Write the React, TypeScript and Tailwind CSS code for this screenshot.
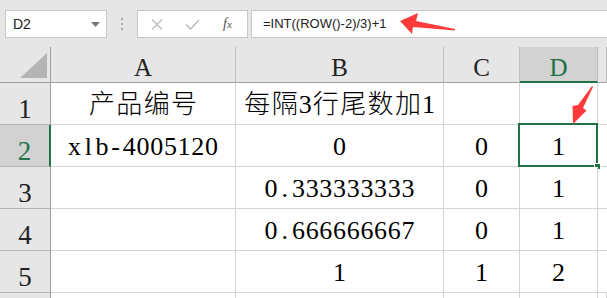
import React from "react";

const isCJK = (c: string) => /[\u3000-\u9fff\uff00-\uffef]/.test(c);

function Txt({ s }: { s: string }) {
  return (
    <>
      {s.split("").map((c, i) =>
        isCJK(c) ? (
          <span key={i} className="inline-block w-[27.4px] text-center text-[26px] font-light">
            {c}
          </span>
        ) : (
          <span key={i} className="inline-block w-[13.7px] text-center">
            {c}
          </span>
        )
      )}
    </>
  );
}

const cols = ["A", "B", "C", "D", ""];
const rows: string[][] = [
  ["产品编号", "每隔3行尾数加1", "", ""],
  ["xlb-4005120", "0", "0", "1"],
  ["", "0.333333333", "0", "1"],
  ["", "0.666666667", "0", "1"],
  ["", "1", "1", "2"],
];

export default function App() {
  return (
    <div className="relative w-[607px] h-[298px] overflow-hidden bg-[#e6e6e6] font-['Liberation_Serif','Noto_Sans_CJK_SC',serif]">
      {/* toolbar */}
      <div className="h-[47px] flex items-start pt-[10px] pl-[5px] font-['Liberation_Sans',Arial,sans-serif]">
        <div className="w-[102px] h-[28px] bg-white border border-[#c6c6c6] flex items-center justify-between pl-[7px] pr-[6px]">
          <span className="text-[14px] text-[#222]">D2</span>
          <svg width="9" height="5" viewBox="0 0 9 5">
            <path d="M0 0 L9 0 L4.5 5 Z" fill="#777" />
          </svg>
        </div>
        <div className="w-[30px] h-[28px] flex flex-col items-center justify-center gap-[3px]">
          <span className="w-[2px] h-[2px] bg-[#a8a8a8]" />
          <span className="w-[2px] h-[2px] bg-[#a8a8a8]" />
          <span className="w-[2px] h-[2px] bg-[#a8a8a8]" />
        </div>
        <div className="w-[111px] h-[28px] bg-white border border-[#c6c6c6] flex items-center">
          <svg className="ml-[13px]" width="12" height="11" viewBox="0 0 12 11">
            <path d="M1 0.5 L11 10.5 M11 0.5 L1 10.5" stroke="#bdbdbd" strokeWidth="1.4" fill="none" />
          </svg>
          <svg className="ml-[22px]" width="15" height="11" viewBox="0 0 15 11">
            <path d="M1 5.5 L5.5 10 L14 1" stroke="#bdbdbd" strokeWidth="1.6" fill="none" />
          </svg>
          <span className="ml-[23px] text-[14px] italic text-[#555] font-['Liberation_Serif',serif] leading-none">
            f<span className="text-[11px]">x</span>
          </span>
        </div>
        <div className="ml-[3px] flex-1 h-[28px] bg-white border border-r-0 border-[#c6c6c6] flex items-center pl-[11px]">
          <span className="text-[13px] text-[#222]">=INT((ROW()-2)/3)+1</span>
        </div>
      </div>

      {/* grid */}
      <div className="grid grid-cols-[51px_185px_208px_76px_78px_1fr] grid-rows-[36px_42px_42px_42px_42px_42px_42px]">
        {/* header row */}
        <div className="relative border-r border-b border-r-[#9e9e9e] border-b-[#9e9e9e]">
          <svg className="absolute left-[19px] top-[5px]" width="29" height="27" viewBox="0 0 29 27">
            <path d="M1 26 L28 1 L28 26 Z" fill="#b4b4b4" />
          </svg>
        </div>
        {cols.map((c, i) => (
          <div
            key={c + i}
            className={
              c === "D"
                ? "flex items-end justify-center pb-[1px] bg-[#d2d2d2] border-r border-r-[#bcbcbc] border-b-2 border-b-[#217346] text-[#217346] text-[25px] leading-none"
                : "flex items-end justify-center pb-[2px] border-r border-r-[#bcbcbc] border-b border-b-[#9e9e9e] text-[#222] text-[25px] leading-none"
            }
          >
            {c}
          </div>
        ))}
        {rows.map((r, ri) => (
          <React.Fragment key={ri}>
            <div
              className={
                ri === 1
                  ? "flex items-end justify-center pb-[1px] bg-[#d2d2d2] border-r-2 border-r-[#217346] border-b border-b-[#b4b4b4] text-[#217346] text-[27px] leading-none"
                  : "flex items-end justify-center pb-[1px] border-r border-r-[#9e9e9e] border-b border-b-[#b4b4b4] text-[#222] text-[27px] leading-none"
              }
            >
              {ri + 1}
            </div>
            {r.map((v, ci) => (
              <div
                key={ci}
                className="relative bg-white flex items-end justify-center pb-[6px] border-r border-b border-[#d4d4d4] text-[26px] leading-none text-black"
              >
                <span className="whitespace-nowrap">
                  <Txt s={v} />
                </span>
                {ri === 1 && ci === 3 && (
                  <div className="absolute left-[-2px] top-[-2px] w-[80px] h-[44px] border-2 border-[#217346]">
                    <div className="absolute right-[-5px] bottom-[-5px] w-[7px] h-[7px] bg-[#217346] border border-white" />
                  </div>
                )}
              </div>
            ))}
            <div className="bg-white border-b border-[#d4d4d4]" />
          </React.Fragment>
        ))}
        <div className="border-r border-r-[#9e9e9e]" />
        {[0, 1, 2, 3, 4].map((i) => (
          <div key={i} className="bg-white border-r border-[#d4d4d4]" />
        ))}
      </div>

      {/* arrows */}
      <svg className="absolute left-0 top-0 pointer-events-none" width="607" height="298" viewBox="0 0 607 298">
        <path d="M400 21 L418 13 L416 21 L455 29 L455 30.5 L413 27 L412 34 Z" fill="#ff3a3a" />
        <path d="M592 86 L593 87 L583 108 L586.5 110.5 L573 124 L572.5 106 L578 105 Z" fill="#ff3a3a" />
      </svg>
    </div>
  );
}
